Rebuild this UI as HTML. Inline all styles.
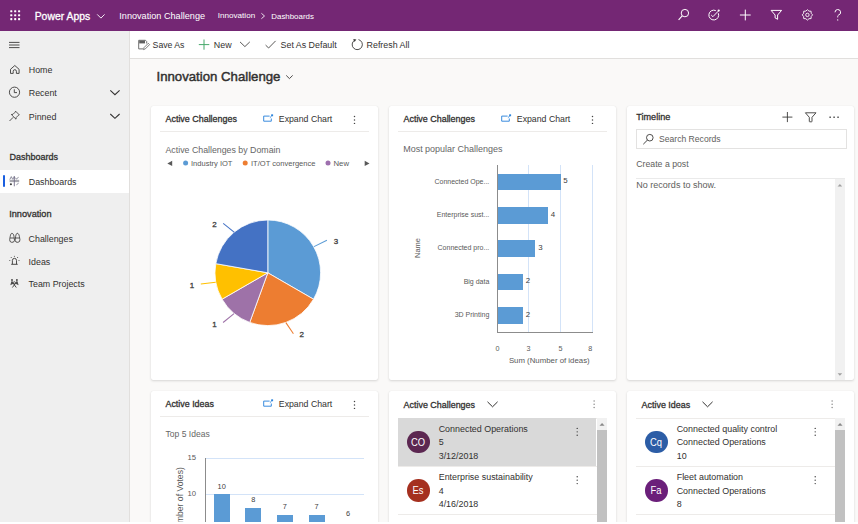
<!DOCTYPE html>
<html><head><meta charset="utf-8"><style>
html,body{margin:0;padding:0;width:858px;height:524px;overflow:hidden;background:#faf9f8;font-family:"Liberation Sans",sans-serif;}
.t{position:absolute;white-space:nowrap;line-height:1;}
svg{overflow:visible}
</style></head><body>
<div style="position:absolute;left:0px;top:0px;width:858px;height:31px;background:#742774"></div>
<div style="position:absolute;left:0px;top:31px;width:129px;height:493px;background:#efefef"></div>
<div style="position:absolute;left:129px;top:31px;width:1px;height:493px;background:#e1dfdd"></div>
<div style="position:absolute;left:130px;top:31px;width:728px;height:27px;background:#fff"></div>
<div style="position:absolute;left:130px;top:58px;width:728px;height:1px;background:#e1dfdd"></div>
<div style="position:absolute;left:130px;top:59px;width:728px;height:465px;background:#faf9f8"></div>
<div style="position:absolute;left:151px;top:106px;width:227px;height:274px;background:#fff;border-radius:2px;box-shadow:0 1px 2.4px rgba(0,0,0,.14),0 0 0.8px rgba(0,0,0,.1)"></div>
<div style="position:absolute;left:389px;top:106px;width:227px;height:274px;background:#fff;border-radius:2px;box-shadow:0 1px 2.4px rgba(0,0,0,.14),0 0 0.8px rgba(0,0,0,.1)"></div>
<div style="position:absolute;left:627px;top:106px;width:227.4px;height:274px;background:#fff;border-radius:2px;box-shadow:0 1px 2.4px rgba(0,0,0,.14),0 0 0.8px rgba(0,0,0,.1)"></div>
<div style="position:absolute;left:151px;top:391px;width:227px;height:160px;background:#fff;border-radius:2px;box-shadow:0 1px 2.4px rgba(0,0,0,.14),0 0 0.8px rgba(0,0,0,.1)"></div>
<div style="position:absolute;left:389px;top:391px;width:227px;height:160px;background:#fff;border-radius:2px;box-shadow:0 1px 2.4px rgba(0,0,0,.14),0 0 0.8px rgba(0,0,0,.1)"></div>
<div style="position:absolute;left:627px;top:391px;width:227.4px;height:160px;background:#fff;border-radius:2px;box-shadow:0 1px 2.4px rgba(0,0,0,.14),0 0 0.8px rgba(0,0,0,.1)"></div>
<div class="t" style="left:34.70px;top:11.68px;font-size:10.4px;font-weight:400;-webkit-text-stroke:0.3px currentColor;color:#fff;">Power Apps</div>
<div class="t" style="left:119.30px;top:11.88px;font-size:9.15px;font-weight:400;color:#fff;">Innovation Challenge</div>
<div class="t" style="left:217.80px;top:12.42px;font-size:8.1px;font-weight:400;color:#fff;">Innovation</div>
<div class="t" style="left:271.30px;top:12.58px;font-size:7.9px;font-weight:400;color:#fff;">Dashboards</div>
<div class="t" style="left:152.60px;top:40.94px;font-size:8.7px;font-weight:400;color:#323130;">Save As</div>
<div class="t" style="left:213.80px;top:40.78px;font-size:8.9px;font-weight:400;color:#323130;">New</div>
<div class="t" style="left:280.60px;top:40.82px;font-size:8.85px;font-weight:400;color:#323130;">Set As Default</div>
<div class="t" style="left:366.60px;top:40.82px;font-size:8.85px;font-weight:400;color:#323130;">Refresh All</div>
<div class="t" style="left:28.80px;top:66.02px;font-size:8.85px;font-weight:400;color:#323130;">Home</div>
<div class="t" style="left:28.80px;top:88.52px;font-size:8.85px;font-weight:400;color:#323130;">Recent</div>
<div class="t" style="left:28.80px;top:112.52px;font-size:8.85px;font-weight:400;color:#323130;">Pinned</div>
<div class="t" style="left:9.40px;top:152.80px;font-size:9.0px;font-weight:400;-webkit-text-stroke:0.3px currentColor;color:#323130;">Dashboards</div>
<div style="position:absolute;left:0px;top:170px;width:129px;height:23px;background:#fff"></div>
<div style="position:absolute;left:2.5px;top:175px;width:2.7px;height:12.2px;background:#1a5fe0;border-radius:1.3px"></div>
<div class="t" style="left:28.80px;top:177.52px;font-size:8.85px;font-weight:400;color:#323130;">Dashboards</div>
<div class="t" style="left:9.20px;top:209.64px;font-size:9.2px;font-weight:400;-webkit-text-stroke:0.3px currentColor;color:#323130;">Innovation</div>
<div class="t" style="left:28.60px;top:234.52px;font-size:8.85px;font-weight:400;color:#323130;">Challenges</div>
<div class="t" style="left:28.60px;top:257.52px;font-size:8.85px;font-weight:400;color:#323130;">Ideas</div>
<div class="t" style="left:28.60px;top:279.52px;font-size:8.85px;font-weight:400;color:#323130;">Team Projects</div>
<div class="t" style="left:156.50px;top:70.24px;font-size:13.2px;font-weight:400;-webkit-text-stroke:0.3px currentColor;color:#323130;-webkit-text-stroke:0.45px #323130;">Innovation Challenge</div>
<div class="t" style="left:165.50px;top:114.86px;font-size:8.93px;font-weight:400;-webkit-text-stroke:0.3px currentColor;color:#323130;">Active Challenges</div>
<div class="t" style="left:278.80px;top:115.00px;font-size:8.75px;font-weight:400;color:#323130;">Expand Chart</div>
<div style="position:absolute;left:160px;top:130.8px;width:209px;height:1px;background:#edebe9"></div>
<div class="t" style="left:165.50px;top:145.66px;font-size:8.8px;font-weight:400;color:#666;">Active Challenges by Domain</div>
<div class="t" style="left:191.00px;top:159.67px;font-size:7.54px;font-weight:400;color:#595959;">Industry IOT</div>
<div class="t" style="left:251.00px;top:159.66px;font-size:7.55px;font-weight:400;color:#595959;">IT/OT convergence</div>
<div class="t" style="left:333.50px;top:159.50px;font-size:7.75px;font-weight:400;color:#595959;">New</div>
<svg style="position:absolute;left:0;top:0" width="858" height="524"><path d="M267.8 272.8 L267.80 220.00 A52.8 52.8 0 0 1 313.53 299.20 Z" fill="#5b9bd5" stroke="#fff" stroke-width="0.8" stroke-linejoin="round"/><path d="M267.8 272.8 L313.53 299.20 A52.8 52.8 0 0 1 249.74 322.42 Z" fill="#ed7d31" stroke="#fff" stroke-width="0.8" stroke-linejoin="round"/><path d="M267.8 272.8 L249.74 322.42 A52.8 52.8 0 0 1 222.07 299.20 Z" fill="#9e72a8" stroke="#fff" stroke-width="0.8" stroke-linejoin="round"/><path d="M267.8 272.8 L222.07 299.20 A52.8 52.8 0 0 1 215.80 263.63 Z" fill="#ffc000" stroke="#fff" stroke-width="0.8" stroke-linejoin="round"/><path d="M267.8 272.8 L215.80 263.63 A52.8 52.8 0 0 1 267.80 220.00 Z" fill="#4472c4" stroke="#fff" stroke-width="0.8" stroke-linejoin="round"/><path d="M314.0 246.6 L326.9 240.3" stroke="#5b9bd5" stroke-width="1.05"/><path d="M285.9 322.6 L293.4 333.7" stroke="#ed7d31" stroke-width="1.05"/><path d="M234.0 313.6 L223.1 322.5" stroke="#9e72a8" stroke-width="1.05"/><path d="M215.7 282.3 L200.8 284.0" stroke="#ffc000" stroke-width="1.05"/><path d="M234.1 232.1 L223.2 223.4" stroke="#4472c4" stroke-width="1.05"/></svg>
<div class="t" style="left:335.90px;transform:translateX(-50%);top:238.35px;font-size:8.0px;font-weight:400;-webkit-text-stroke:0.3px currentColor;color:#404040;">3</div>
<div class="t" style="left:301.70px;transform:translateX(-50%);top:331.30px;font-size:8.0px;font-weight:400;-webkit-text-stroke:0.3px currentColor;color:#404040;">2</div>
<div class="t" style="left:214.40px;transform:translateX(-50%);top:320.60px;font-size:8.0px;font-weight:400;-webkit-text-stroke:0.3px currentColor;color:#404040;">1</div>
<div class="t" style="left:191.90px;transform:translateX(-50%);top:281.80px;font-size:8.0px;font-weight:400;-webkit-text-stroke:0.3px currentColor;color:#404040;">1</div>
<div class="t" style="left:214.40px;transform:translateX(-50%);top:220.70px;font-size:8.0px;font-weight:400;-webkit-text-stroke:0.3px currentColor;color:#404040;">2</div>
<div class="t" style="left:403.50px;top:114.86px;font-size:8.93px;font-weight:400;-webkit-text-stroke:0.3px currentColor;color:#323130;">Active Challenges</div>
<div class="t" style="left:516.80px;top:115.00px;font-size:8.75px;font-weight:400;color:#323130;">Expand Chart</div>
<div style="position:absolute;left:398px;top:130.8px;width:209px;height:1px;background:#edebe9"></div>
<div class="t" style="left:403.20px;top:145.12px;font-size:8.98px;font-weight:400;color:#666;">Most popular Challenges</div>
<div style="position:absolute;left:528.0px;top:165px;width:1px;height:167px;background:#d3e3f8"></div>
<div style="position:absolute;left:559.8px;top:165px;width:1px;height:167px;background:#d3e3f8"></div>
<div style="position:absolute;left:592.1px;top:165px;width:1px;height:167px;background:#d3e3f8"></div>
<div style="position:absolute;left:497.09999999999997px;top:165px;width:1px;height:167.5px;background:#8c8c8c"></div>
<div style="position:absolute;left:497.09999999999997px;top:331.7px;width:95.5px;height:1px;background:#8c8c8c"></div>
<div style="position:absolute;left:497.79999999999995px;top:173.9px;width:62.75px;height:16.4px;background:#5b9bd5"></div>
<div class="t" style="right:368.70px;top:177.70px;font-size:7.0px;font-weight:400;color:#595959;">Connected Ope...</div>
<div class="t" style="left:563.35px;top:177.28px;font-size:7.9px;font-weight:400;color:#404040;">5</div>
<div style="position:absolute;left:497.79999999999995px;top:207.2px;width:50.2px;height:16.4px;background:#5b9bd5"></div>
<div class="t" style="right:368.70px;top:211.00px;font-size:7.0px;font-weight:400;color:#595959;">Enterprise sust...</div>
<div class="t" style="left:550.80px;top:210.58px;font-size:7.9px;font-weight:400;color:#404040;">4</div>
<div style="position:absolute;left:497.79999999999995px;top:240.3px;width:37.650000000000006px;height:16.4px;background:#5b9bd5"></div>
<div class="t" style="right:368.70px;top:244.10px;font-size:7.0px;font-weight:400;color:#595959;">Connected pro...</div>
<div class="t" style="left:538.25px;top:243.68px;font-size:7.9px;font-weight:400;color:#404040;">3</div>
<div style="position:absolute;left:497.79999999999995px;top:274px;width:25.1px;height:16.4px;background:#5b9bd5"></div>
<div class="t" style="right:368.70px;top:277.80px;font-size:7.0px;font-weight:400;color:#595959;">Big data</div>
<div class="t" style="left:525.70px;top:277.38px;font-size:7.9px;font-weight:400;color:#404040;">2</div>
<div style="position:absolute;left:497.79999999999995px;top:307.2px;width:25.1px;height:16.4px;background:#5b9bd5"></div>
<div class="t" style="right:368.70px;top:311.00px;font-size:7.0px;font-weight:400;color:#595959;">3D Printing</div>
<div class="t" style="left:525.70px;top:310.58px;font-size:7.9px;font-weight:400;color:#404040;">2</div>
<div class="t" style="left:497.40px;transform:translateX(-50%);top:344.64px;font-size:7.2px;font-weight:400;color:#595959;">0</div>
<div class="t" style="left:528.60px;transform:translateX(-50%);top:344.64px;font-size:7.2px;font-weight:400;color:#595959;">3</div>
<div class="t" style="left:560.40px;transform:translateX(-50%);top:344.64px;font-size:7.2px;font-weight:400;color:#595959;">5</div>
<div class="t" style="left:590.20px;transform:translateX(-50%);top:344.64px;font-size:7.2px;font-weight:400;color:#595959;">8</div>
<div class="t" style="left:508.90px;top:356.94px;font-size:7.82px;font-weight:400;color:#595959;">Sum (Number of ideas)</div>
<div class="t" style="left:420.80px;top:242.00px;font-size:7.5px;font-weight:400;color:#595959;transform-origin:0 0;transform:rotate(-90deg);left:414.2px;top:257.9px;">Name</div>
<div class="t" style="left:636.30px;top:113.32px;font-size:9.1px;font-weight:400;-webkit-text-stroke:0.3px currentColor;color:#323130;">Timeline</div>
<div style="position:absolute;left:636.3px;top:128.6px;width:210.7px;height:20px;border:1px solid #e3e2e1;box-sizing:border-box;background:#fff"></div>
<div class="t" style="left:659.00px;top:135.42px;font-size:8.6px;font-weight:400;color:#605e5c;">Search Records</div>
<div class="t" style="left:636.30px;top:159.62px;font-size:8.73px;font-weight:400;color:#605e5c;">Create a post</div>
<div style="position:absolute;left:636.3px;top:178px;width:209px;height:1px;background:#eaeaea"></div>
<div class="t" style="left:636.30px;top:181.28px;font-size:9.02px;font-weight:400;color:#605e5c;">No records to show.</div>
<div style="position:absolute;left:835px;top:179px;width:10px;height:201px;background:#f1f1f1"></div>
<div class="t" style="left:165.50px;top:400.08px;font-size:8.9px;font-weight:400;-webkit-text-stroke:0.3px currentColor;color:#323130;">Active Ideas</div>
<div class="t" style="left:278.80px;top:400.00px;font-size:8.75px;font-weight:400;color:#323130;">Expand Chart</div>
<div style="position:absolute;left:160px;top:415.8px;width:209px;height:1px;background:#edebe9"></div>
<div class="t" style="left:165.50px;top:430.46px;font-size:8.55px;font-weight:400;color:#666;">Top 5 Ideas</div>
<div style="position:absolute;left:205px;top:457.6px;width:159px;height:1px;background:#d3e3f8"></div>
<div style="position:absolute;left:205px;top:493.7px;width:159px;height:1px;background:#d3e3f8"></div>
<div style="position:absolute;left:204.7px;top:457.6px;width:1px;height:70px;background:#8c8c8c"></div>
<div class="t" style="right:662.00px;top:454.24px;font-size:7.7px;font-weight:400;color:#595959;">15</div>
<div class="t" style="right:662.00px;top:489.94px;font-size:7.7px;font-weight:400;color:#595959;">10</div>
<div style="position:absolute;left:213.7px;top:494.2px;width:16px;height:39.80000000000001px;background:#5b9bd5"></div>
<div class="t" style="left:221.70px;transform:translateX(-50%);top:482.58px;font-size:7.4px;font-weight:400;color:#404040;">10</div>
<div style="position:absolute;left:245.29999999999998px;top:508.09999999999997px;width:16px;height:25.900000000000034px;background:#5b9bd5"></div>
<div class="t" style="left:253.30px;transform:translateX(-50%);top:496.48px;font-size:7.4px;font-weight:400;color:#404040;">8</div>
<div style="position:absolute;left:276.9px;top:515.05px;width:16px;height:18.950000000000045px;background:#5b9bd5"></div>
<div class="t" style="left:284.90px;transform:translateX(-50%);top:503.43px;font-size:7.4px;font-weight:400;color:#404040;">7</div>
<div style="position:absolute;left:308.5px;top:515.05px;width:16px;height:18.950000000000045px;background:#5b9bd5"></div>
<div class="t" style="left:316.50px;transform:translateX(-50%);top:503.43px;font-size:7.4px;font-weight:400;color:#404040;">7</div>
<div style="position:absolute;left:340.1px;top:522.0px;width:16px;height:12.0px;background:#5b9bd5"></div>
<div class="t" style="left:348.10px;transform:translateX(-50%);top:510.38px;font-size:7.4px;font-weight:400;color:#404040;">6</div>
<div class="t" style="left:184.00px;top:463.12px;font-size:8.6px;font-weight:400;color:#595959;transform-origin:0 0;transform:rotate(-90deg);left:175.7px;top:557.3px;">Sum (Number of Votes)</div>
<div class="t" style="left:403.60px;top:400.86px;font-size:8.93px;font-weight:400;-webkit-text-stroke:0.3px currentColor;color:#323130;">Active Challenges</div>
<div style="position:absolute;left:398.3px;top:417.5px;width:199px;height:1px;background:#edebe9"></div>
<div style="position:absolute;left:398.3px;top:417.6px;width:197.9px;height:48.4px;background:#d9d9d9"></div>
<div style="position:absolute;left:398.3px;top:465.8px;width:199px;height:1px;background:#edebe9"></div>
<div style="position:absolute;left:407.04999999999995px;top:430.65px;width:22.7px;height:22.7px;background:#5c2751;border-radius:50%"></div>
<div class="t" style="left:418.40px;transform:translateX(-50%);top:437.90px;font-size:10px;font-weight:400;color:#fff;transform:translateX(-50%) scaleX(0.94);">CO</div>
<div class="t" style="left:438.70px;top:425.06px;font-size:8.92px;font-weight:400;color:#323130;">Connected Operations</div>
<div class="t" style="left:438.70px;top:438.46px;font-size:8.92px;font-weight:400;color:#323130;">5</div>
<div class="t" style="left:438.70px;top:452.16px;font-size:8.92px;font-weight:400;color:#323130;">3/12/2018</div>
<div style="position:absolute;left:398.3px;top:514.1px;width:199px;height:1px;background:#edebe9"></div>
<div style="position:absolute;left:407.04999999999995px;top:478.95px;width:22.7px;height:22.7px;background:#a5301f;border-radius:50%"></div>
<div class="t" style="left:418.40px;transform:translateX(-50%);top:486.20px;font-size:10px;font-weight:400;color:#fff;transform:translateX(-50%) scaleX(0.94);">Es</div>
<div class="t" style="left:438.70px;top:473.36px;font-size:8.92px;font-weight:400;color:#323130;">Enterprise sustainability</div>
<div class="t" style="left:438.70px;top:486.76px;font-size:8.92px;font-weight:400;color:#323130;">4</div>
<div class="t" style="left:438.70px;top:500.46px;font-size:8.92px;font-weight:400;color:#323130;">4/16/2018</div>
<div style="position:absolute;left:398.3px;top:562.4000000000001px;width:199px;height:1px;background:#edebe9"></div>
<div style="position:absolute;left:407.04999999999995px;top:527.25px;width:22.7px;height:22.7px;background:#2b7a3f;border-radius:50%"></div>
<div class="t" style="left:418.40px;transform:translateX(-50%);top:534.50px;font-size:10px;font-weight:400;color:#fff;transform:translateX(-50%) scaleX(0.94);">Cs</div>
<div class="t" style="left:438.70px;top:521.66px;font-size:8.92px;font-weight:400;color:#323130;">Connected production</div>
<div class="t" style="left:438.70px;top:535.06px;font-size:8.92px;font-weight:400;color:#323130;">3</div>
<div class="t" style="left:438.70px;top:548.76px;font-size:8.92px;font-weight:400;color:#323130;">5/2/2018</div>
<div style="position:absolute;left:596.8px;top:418.3px;width:10.2px;height:120px;background:#f1f1f1"></div>
<div style="position:absolute;left:597.2px;top:429.7px;width:9.8px;height:120px;background:#c1c1c1"></div>
<div class="t" style="left:641.60px;top:400.86px;font-size:8.93px;font-weight:400;-webkit-text-stroke:0.3px currentColor;color:#323130;">Active Ideas</div>
<div style="position:absolute;left:636.3px;top:417.5px;width:199px;height:1px;background:#edebe9"></div>
<div style="position:absolute;left:636.3px;top:465.8px;width:199px;height:1px;background:#edebe9"></div>
<div style="position:absolute;left:645.05px;top:430.65px;width:22.7px;height:22.7px;background:#2c5da6;border-radius:50%"></div>
<div class="t" style="left:656.40px;transform:translateX(-50%);top:437.90px;font-size:10px;font-weight:400;color:#fff;transform:translateX(-50%) scaleX(0.94);">Cq</div>
<div class="t" style="left:676.70px;top:425.06px;font-size:8.92px;font-weight:400;color:#323130;">Connected quality control</div>
<div class="t" style="left:676.70px;top:438.46px;font-size:8.92px;font-weight:400;color:#323130;">Connected Operations</div>
<div class="t" style="left:676.70px;top:452.16px;font-size:8.92px;font-weight:400;color:#323130;">10</div>
<div style="position:absolute;left:636.3px;top:514.1px;width:199px;height:1px;background:#edebe9"></div>
<div style="position:absolute;left:645.05px;top:478.95px;width:22.7px;height:22.7px;background:#6b1f7a;border-radius:50%"></div>
<div class="t" style="left:656.40px;transform:translateX(-50%);top:486.20px;font-size:10px;font-weight:400;color:#fff;transform:translateX(-50%) scaleX(0.94);">Fa</div>
<div class="t" style="left:676.70px;top:473.36px;font-size:8.92px;font-weight:400;color:#323130;">Fleet automation</div>
<div class="t" style="left:676.70px;top:486.76px;font-size:8.92px;font-weight:400;color:#323130;">Connected Operations</div>
<div class="t" style="left:676.70px;top:500.46px;font-size:8.92px;font-weight:400;color:#323130;">8</div>
<div style="position:absolute;left:636.3px;top:562.4000000000001px;width:199px;height:1px;background:#edebe9"></div>
<div style="position:absolute;left:645.05px;top:527.25px;width:22.7px;height:22.7px;background:#2b7a3f;border-radius:50%"></div>
<div class="t" style="left:656.40px;transform:translateX(-50%);top:534.50px;font-size:10px;font-weight:400;color:#fff;transform:translateX(-50%) scaleX(0.94);">Cm</div>
<div class="t" style="left:676.70px;top:521.66px;font-size:8.92px;font-weight:400;color:#323130;">Cloud monitoring</div>
<div class="t" style="left:676.70px;top:535.06px;font-size:8.92px;font-weight:400;color:#323130;">Connected Operations</div>
<div class="t" style="left:676.70px;top:548.76px;font-size:8.92px;font-weight:400;color:#323130;">7</div>
<div style="position:absolute;left:834.8px;top:418.3px;width:10.2px;height:120px;background:#f1f1f1"></div>
<div style="position:absolute;left:835.2px;top:429.7px;width:9.8px;height:120px;background:#c1c1c1"></div>
<svg style="position:absolute;left:0;top:0" width="858" height="524"><rect x="10.25" y="10.25" width="2.1" height="2.1" rx="0.6" fill="#fff"/><rect x="10.25" y="14.15" width="2.1" height="2.1" rx="0.6" fill="#fff"/><rect x="10.25" y="18.05" width="2.1" height="2.1" rx="0.6" fill="#fff"/><rect x="14.15" y="10.25" width="2.1" height="2.1" rx="0.6" fill="#fff"/><rect x="14.15" y="14.15" width="2.1" height="2.1" rx="0.6" fill="#fff"/><rect x="14.15" y="18.05" width="2.1" height="2.1" rx="0.6" fill="#fff"/><rect x="18.05" y="10.25" width="2.1" height="2.1" rx="0.6" fill="#fff"/><rect x="18.05" y="14.15" width="2.1" height="2.1" rx="0.6" fill="#fff"/><rect x="18.05" y="18.05" width="2.1" height="2.1" rx="0.6" fill="#fff"/><path d="M97.2 14.4 L100.9 18.1 L104.6 14.4" fill="none" stroke="#fff" stroke-width="0.9" /><path d="M261.4 13.3 L264.5 16 L261.4 18.7" fill="none" stroke="#fff" stroke-width="0.85" /><circle cx="684.9" cy="13.1" r="3.7" fill="none" stroke="#fff" stroke-width="1"/><path d="M682.2 15.8 L678.6 19.8" fill="none" stroke="#fff" stroke-width="1.1" /><path d="M718.3 13.2 A4.9 4.9 0 1 1 715.8 10.6" fill="none" stroke="#fff" stroke-width="1"/><path d="M711.2 15 L712.9 16.7 L718.2 11.2" fill="none" stroke="#fff" stroke-width="1" /><circle cx="718.7" cy="10.6" r="1.1" fill="#fff"/><path d="M745.3 9.6 V20.4 M739.9 15 H750.7" fill="none" stroke="#fff" stroke-width="1" /><path d="M771.1 10.4 H781.6 L777.6 15 V19.3 L775.1 17.9 V15 Z" fill="none" stroke="#fff" stroke-width="1" stroke-linejoin="round"/><path d="M807.40 20.10 L808.97 18.69 L811.08 18.58 L811.19 16.47 L812.60 14.90 L811.19 13.33 L811.08 11.22 L808.97 11.11 L807.40 9.70 L805.83 11.11 L803.72 11.22 L803.61 13.33 L802.20 14.90 L803.61 16.47 L803.72 18.58 L805.83 18.69 Z" fill="none" stroke="#fff" stroke-width="0.9" stroke-linejoin="round"/><circle cx="807.4" cy="14.9" r="1.7" fill="none" stroke="#fff" stroke-width="0.9"/><path d="M835 12.3 A2.8 2.8 0 1 1 838.6 15 Q837.7 15.5 837.7 16.6 V17.4" fill="none" stroke="#fff" stroke-width="1" /><circle cx="837.7" cy="19.9" r="0.65" fill="#fff"/><path d="M143 48.9 H138.7 V40.3 H145.5 L146.7 41.5 V43.5" fill="none" stroke="#5f5f5f" stroke-width="0.9" /><rect x="139.2" y="40.6" width="5.8" height="2.8" fill="#5f5f5f"/><path d="M143.5 49.6 L144 47.6 L148.3 43.3 L149.6 44.6 L145.3 48.9 Z" fill="none" stroke="#5f5f5f" stroke-width="0.8" stroke-linejoin="round"/><path d="M204 39.5 V49.7 M198.8 44.6 H209.3" fill="none" stroke="#47a86a" stroke-width="1" /><path d="M240 41.9 L244.9 46.6 L249.8 41.9" fill="none" stroke="#3b3a39" stroke-width="0.85" /><path d="M265.6 45.1 L268.6 48 L275.6 40.9" fill="none" stroke="#3b3a39" stroke-width="0.85" /><path d="M358.5 39.6 A5.1 5.1 0 1 1 354.6 40.2" fill="none" stroke="#3b3a39" stroke-width="0.9"/><path d="M353.2 39.1 L356.4 39.5 L354.5 42 Z" fill="#3b3a39"/><path d="M9 42.4 H19.5 M9 45 H19.5 M9 47.6 H19.5" fill="none" stroke="#3b3a39" stroke-width="0.9" /><path d="M10.5 69.3 L14.8 65.5 L19.1 69.3 V73.4 H16.4 V71.3 A1.6 1.6 0 0 0 13.2 71.3 V73.4 H10.5 Z" fill="none" stroke="#3b3a39" stroke-width="0.9" stroke-linejoin="round"/><circle cx="14.5" cy="92.2" r="5.1" fill="none" stroke="#3b3a39" stroke-width="0.9"/><path d="M14.3 89.3 V92.6 H17" fill="none" stroke="#3b3a39" stroke-width="0.9" /><path d="M110.3 90.3 L114.95 94.7 L119.6 90.3" fill="none" stroke="#323130" stroke-width="1.05" /><path d="M15.6 111.2 L19.3 114.9 L18.3 115.4 L16.2 117.5 L16 119.2 L11.3 114.5 L13 114.3 L15.1 112.2 Z M13.2 117.3 L9.5 121" fill="none" stroke="#3b3a39" stroke-width="0.85" stroke-linejoin="round"/><path d="M110.3 114 L114.95 118.4 L119.6 114" fill="none" stroke="#323130" stroke-width="1.05" /><rect x="9.6" y="179.8" width="9.6" height="2.3" fill="#a8a8b0"/><path d="M9.8 179.5 L11.3 176.6 L12.8 179.5 M13.3 178.8 L14.3 176.4 L15.3 178.8 M16 179.2 L18.6 177.3" fill="none" stroke="#77778a" stroke-width="0.85" /><path d="M14.3 176.5 V186.3" fill="none" stroke="#6f6a86" stroke-width="0.9" /><circle cx="10.9" cy="184.2" r="1.05" fill="#3a3a3a"/><path d="M16.4 184.8 L18.6 183.2" fill="none" stroke="#77778a" stroke-width="0.85" /><path d="M11.9 233.3 C11.1 233.3 10.6 234.5 10.2 236.5 L9.7 239.6 A2.4 2.4 0 1 0 14.5 240.3 L14 236.5 C13.6 234.5 13 233.3 11.9 233.3 Z M17.3 233.3 C16.5 233.3 16 234.5 15.6 236.5 L15.1 240.3 A2.4 2.4 0 1 0 19.9 239.6 L19.4 236.5 C19 234.5 18.4 233.3 17.3 233.3 Z M10.2 238 H14.1 M15.4 238 H19.3" fill="none" stroke="#3b3a39" stroke-width="0.85" stroke-linejoin="round"/><path d="M12.4 264.2 V260.4 A2.05 2.05 0 0 1 16.5 260.4 V264.2 M11.2 264.3 H17.7" fill="none" stroke="#3b3a39" stroke-width="0.9" /><circle cx="14.4" cy="256.3" r="0.5" fill="#3b3a39"/><circle cx="11.2" cy="257.6" r="0.5" fill="#3b3a39"/><circle cx="17.6" cy="257.6" r="0.5" fill="#3b3a39"/><circle cx="9.8" cy="260.5" r="0.5" fill="#3b3a39"/><circle cx="19" cy="260.5" r="0.5" fill="#3b3a39"/><path d="M12.4 287.5 L16.3 282.3 M16.3 287.5 L12.4 282.3" fill="none" stroke="#3b3a39" stroke-width="0.9" /><circle cx="14.35" cy="282.8" r="1.1" fill="none" stroke="#3b3a39" stroke-width="0.8"/><path d="M10.3 285.2 L11.4 281.2 L12.6 281.2 L13.3 283.8 Z M18.6 285.2 L17.5 281.2 L16.3 281.2 L15.6 283.8 Z" fill="#4a4a4a"/><circle cx="12" cy="280" r="0.9" fill="#3b3a39"/><circle cx="16.9" cy="280" r="0.9" fill="#3b3a39"/><path d="M286.2 75.4 L289.45 78.6 L292.7 75.4" fill="none" stroke="#3b3a39" stroke-width="0.9" /><path d="M269.6 116.1 H263.7 V121.2 H271.3 V118.5" fill="none" stroke="#2f86dc" stroke-width="0.95" stroke-linejoin="round"/><path d="M269.9 117.7 L271.6 116" fill="none" stroke="#2f86dc" stroke-width="0.9" /><rect x="271.1" y="114.3" width="2" height="2" rx="0.4" fill="#2f86dc"/><circle cx="354.5" cy="116.50" r="0.72" fill="#444"/><circle cx="354.5" cy="119.95" r="0.72" fill="#444"/><circle cx="354.5" cy="123.40" r="0.72" fill="#444"/><path d="M172.2 160.8 V166 L167.3 163.4 Z" fill="#595959"/><circle cx="185.6" cy="163.1" r="2.5" fill="#5b9bd5"/><circle cx="245.2" cy="163.1" r="2.5" fill="#ed7d31"/><circle cx="328" cy="163.1" r="2.5" fill="#9e6fae"/><path d="M364.7 160.8 V166 L369.5 163.4 Z" fill="#595959"/><path d="M507.6 116.1 H501.7 V121.2 H509.3 V118.5" fill="none" stroke="#2f86dc" stroke-width="0.95" stroke-linejoin="round"/><path d="M507.9 117.7 L509.6 116" fill="none" stroke="#2f86dc" stroke-width="0.9" /><rect x="509.1" y="114.3" width="2" height="2" rx="0.4" fill="#2f86dc"/><circle cx="592.5" cy="116.50" r="0.72" fill="#444"/><circle cx="592.5" cy="119.95" r="0.72" fill="#444"/><circle cx="592.5" cy="123.40" r="0.72" fill="#444"/><path d="M787.4 112 V122.1 M782.4 117.1 H792.4" fill="none" stroke="#3b3a39" stroke-width="0.9" /><path d="M805.4 112.8 H816 L812 117.3 V121.3 Q812 121.8 811.5 121.8 H809.8 Q809.3 121.8 809.3 121.3 V117.3 Z" fill="none" stroke="#3b3a39" stroke-width="0.9" stroke-linejoin="round"/><rect x="829.40" y="116.5" width="1.5" height="1.5" fill="#555"/><rect x="833.35" y="116.5" width="1.5" height="1.5" fill="#555"/><rect x="837.30" y="116.5" width="1.5" height="1.5" fill="#555"/><circle cx="649.8" cy="137.7" r="3.3" fill="none" stroke="#3b3a39" stroke-width="0.9"/><path d="M647.5 140 L643.3 144.2" fill="none" stroke="#3b3a39" stroke-width="0.95" /><path d="M837.6 186.5 L839.9 183.9 L842.2 186.5 Z" fill="#a0a0a0"/><path d="M837.6 373.2 L839.9 375.8 L842.2 373.2 Z" fill="#a0a0a0"/><path d="M269.6 401.1 H263.7 V406.2 H271.3 V403.5" fill="none" stroke="#2f86dc" stroke-width="0.95" stroke-linejoin="round"/><path d="M269.9 402.7 L271.6 401" fill="none" stroke="#2f86dc" stroke-width="0.9" /><rect x="271.1" y="399.3" width="2" height="2" rx="0.4" fill="#2f86dc"/><circle cx="354.5" cy="401.50" r="0.72" fill="#444"/><circle cx="354.5" cy="404.95" r="0.72" fill="#444"/><circle cx="354.5" cy="408.40" r="0.72" fill="#444"/><path d="M487.5 401.8 L492.55 406.8 L497.6 401.8" fill="none" stroke="#323130" stroke-width="1.0" /><circle cx="594.1" cy="400.90" r="0.75" fill="#8a8a8a"/><circle cx="594.1" cy="404.15" r="0.75" fill="#8a8a8a"/><circle cx="594.1" cy="407.40" r="0.75" fill="#8a8a8a"/><circle cx="577.2" cy="428.40" r="0.72" fill="#444"/><circle cx="577.2" cy="431.85" r="0.72" fill="#444"/><circle cx="577.2" cy="435.30" r="0.72" fill="#444"/><circle cx="577.2" cy="476.70" r="0.72" fill="#444"/><circle cx="577.2" cy="480.15" r="0.72" fill="#444"/><circle cx="577.2" cy="483.60" r="0.72" fill="#444"/><circle cx="577.2" cy="525.00" r="0.72" fill="#444"/><circle cx="577.2" cy="528.45" r="0.72" fill="#444"/><circle cx="577.2" cy="531.90" r="0.72" fill="#444"/><path d="M599.5 425.8 L602.05 423.1 L604.6 425.8 Z" fill="#8a8a8a"/><path d="M702.5 401.8 L707.55 406.8 L712.6 401.8" fill="none" stroke="#323130" stroke-width="1.0" /><circle cx="832.1" cy="400.90" r="0.75" fill="#8a8a8a"/><circle cx="832.1" cy="404.15" r="0.75" fill="#8a8a8a"/><circle cx="832.1" cy="407.40" r="0.75" fill="#8a8a8a"/><circle cx="815.2" cy="428.40" r="0.72" fill="#444"/><circle cx="815.2" cy="431.85" r="0.72" fill="#444"/><circle cx="815.2" cy="435.30" r="0.72" fill="#444"/><circle cx="815.2" cy="476.70" r="0.72" fill="#444"/><circle cx="815.2" cy="480.15" r="0.72" fill="#444"/><circle cx="815.2" cy="483.60" r="0.72" fill="#444"/><circle cx="815.2" cy="525.00" r="0.72" fill="#444"/><circle cx="815.2" cy="528.45" r="0.72" fill="#444"/><circle cx="815.2" cy="531.90" r="0.72" fill="#444"/><path d="M837.5 425.8 L840.05 423.1 L842.6 425.8 Z" fill="#8a8a8a"/></svg>
<div style="position:absolute;left:0px;top:522px;width:858px;height:2px;background:#fff"></div>
</body></html>
